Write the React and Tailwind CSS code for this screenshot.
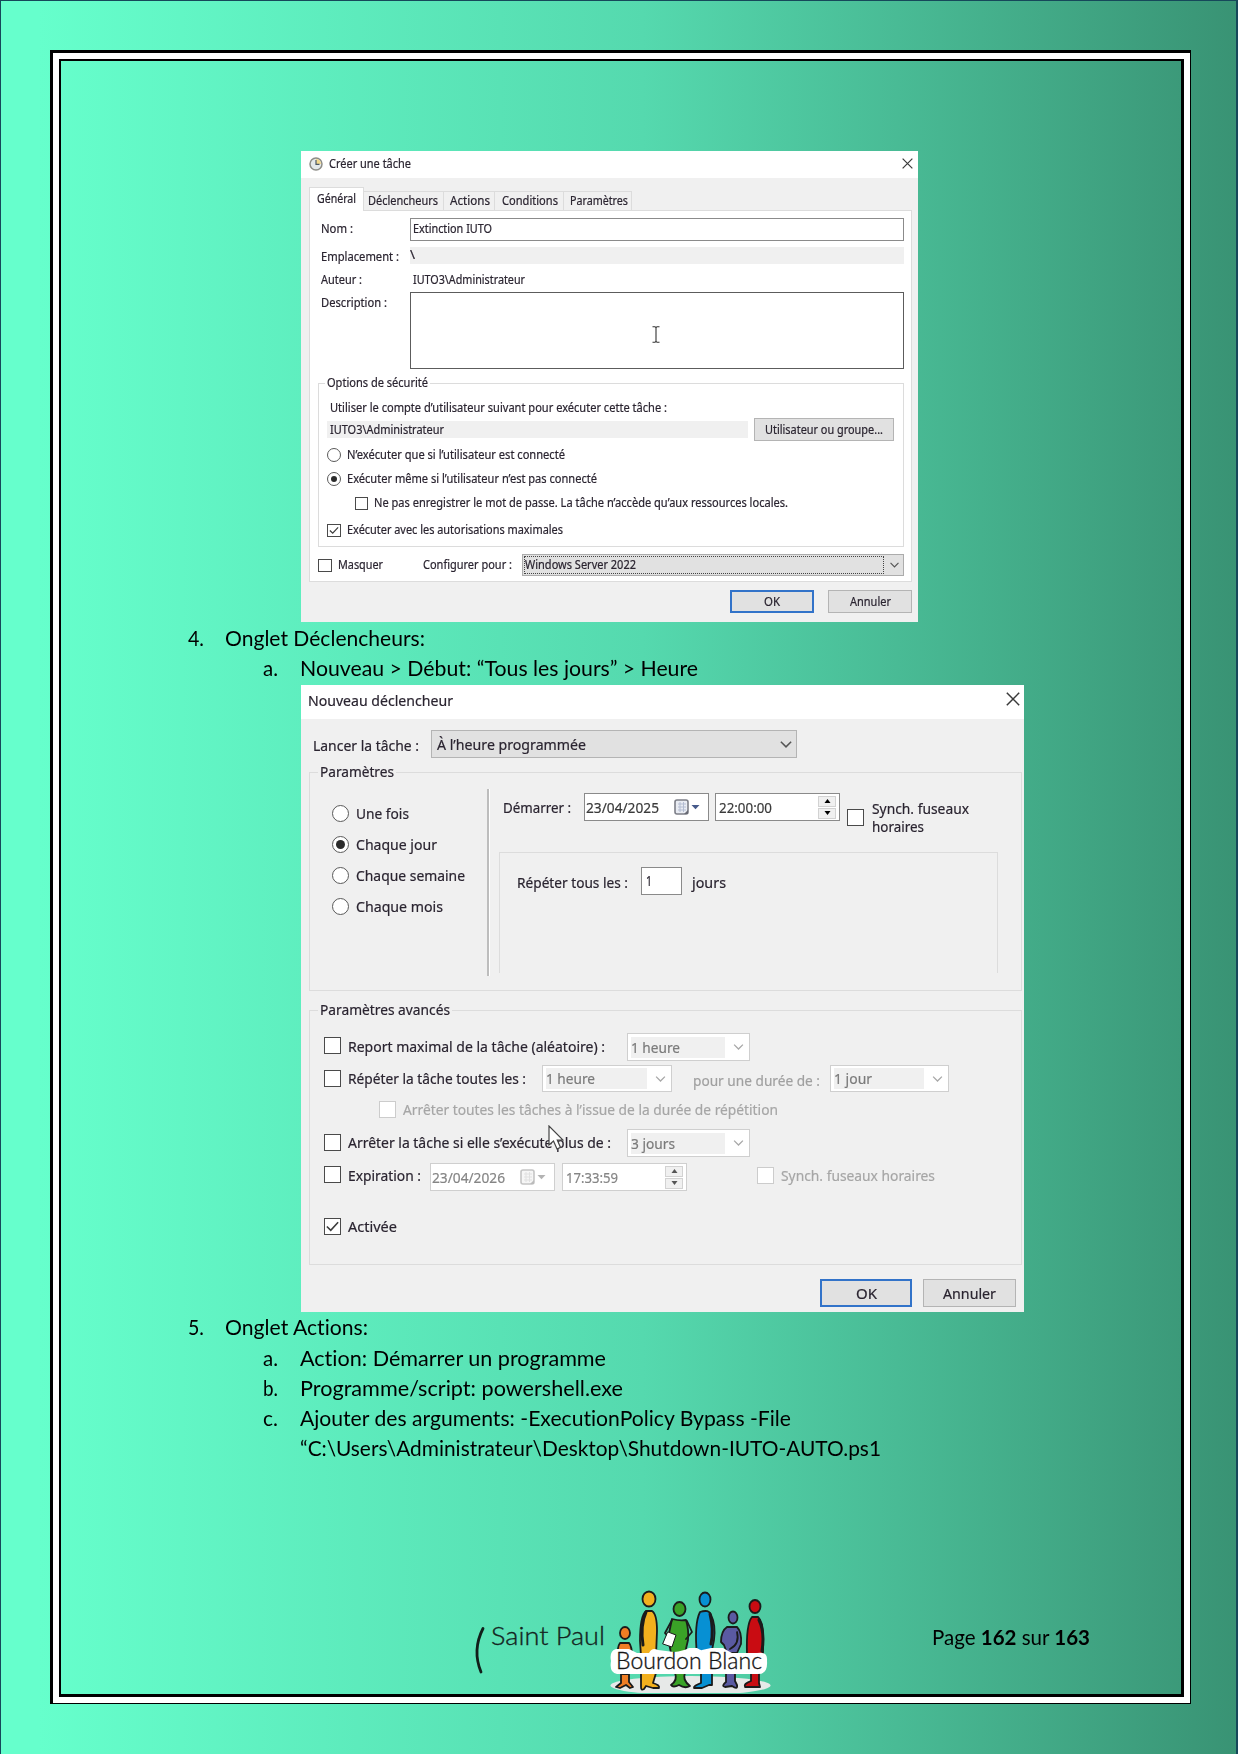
import { useLayoutEffect, useRef } from "react";

// Single-line label whose glyphs are condensed or widened to fill its box.
function T({ className = "", children }) {
  const box = useRef(null);
  const inner = useRef(null);
  useLayoutEffect(() => {
    const el = inner.current;
    el.style.transform = "none";
    const natural = el.getBoundingClientRect().width;
    const wanted = box.current.getBoundingClientRect().width;
    if (natural > 0) el.style.transform = `scaleX(${wanted / natural})`;
  }, [children]);
  return (
    <div ref={box} className={"shrink-0 whitespace-nowrap " + className}>
      <span ref={inner} className="inline-block origin-left">{children}</span>
    </div>
  );
}

function Radio({ checked, className }) {
  return (
    <div className={"flex shrink-0 items-center justify-center rounded-full border border-[#5a5a5a] bg-white " + className}>
      {checked && <div className="h-[58%] w-[58%] rounded-full bg-[#2b2b2b]" />}
    </div>
  );
}

function Check({ checked, muted, className }) {
  return (
    <div className={"shrink-0 border bg-white " + (muted ? "border-[#cccccc] " : "border-[#4a4a4a] ") + className}>
      {checked && (
        <svg viewBox="0 0 12 12" className="h-full w-full" fill="none" stroke="#3c3c3c" strokeWidth="1.3">
          <path d="M1.5 6 L4.6 9 L10.5 2.6" />
        </svg>
      )}
    </div>
  );
}

function Close({ className }) {
  return (
    <svg viewBox="0 0 12 12" className={"shrink-0 " + className} stroke="#3a3a3a" strokeWidth="1.3">
      <path d="M.7 .7 L11.3 11.3 M11.3 .7 L.7 11.3" />
    </svg>
  );
}

function Chevron({ className }) {
  return (
    <svg viewBox="0 0 10 6" className={"shrink-0 " + className} fill="none" strokeWidth="1.3">
      <path d="M.6 .6 L5 5 L9.4 .6" />
    </svg>
  );
}

function Button({ primary, className, children }) {
  return (
    <div className={"flex h-full shrink-0 items-center justify-center bg-[#e1e1e1] " + (primary ? "border-2 border-[#3273c9] " : "border border-[#b4b4b4] ") + className}>
      {children}
    </div>
  );
}

function MutedCombo({ className, children }) {
  return (
    <div className={"flex h-full shrink-0 items-center border border-[#cfcfcf] bg-white pl-[3px] text-[#7b7b7b] " + className}>
      <div className="mr-[8px] flex h-[21px] grow items-center bg-[#f0f0f0]">{children}</div>
      <Chevron className="mr-[5px] h-[6px] w-[11px] stroke-[#a8a8a8]" />
    </div>
  );
}

function DateBox({ muted, className, children }) {
  return (
    <div className={"flex h-full w-[125px] shrink-0 items-center border bg-white pl-[1px] " + (muted ? "border-[#cfcfcf] text-[#858585] " : "border-[#8a8a8a] text-[#3a3a3a] ") + className}>
      {children}
      <svg viewBox="0 0 26 16" className={"ml-auto mr-[8px] h-[16px] w-[26px] shrink-0 " + (muted ? "opacity-45 grayscale" : "")}>
        <rect x="1" y="1" width="13" height="14" rx="2" fill="#e9ecf3" stroke="#7d7f88" strokeWidth="1.6" />
        <path d="M4 5h8M4 8h8M4 11h8M6 3v10M9.500 3v10" stroke="#b4bdd2" strokeWidth="1" />
        <path d="M10 15 L14 11 V15Z" fill="#686a75" />
        <path d="M17.500 6h8l-4 4.200z" fill="#46598a" />
      </svg>
    </div>
  );
}

function TimeBox({ muted, className, children }) {
  return (
    <div className={"flex h-full w-[125px] shrink-0 items-center border bg-white pl-[3px] " + (muted ? "border-[#cfcfcf] text-[#858585] " : "border-[#8a8a8a] text-[#3a3a3a] ") + className}>
      {children}
      <div className="ml-auto mr-[3px] flex h-[23px] w-[18px] shrink-0 flex-col gap-px">
        <div className="flex grow items-center justify-center border border-[#d2d2d2] bg-[#f0f0f0]">
          <svg viewBox="0 0 6 4" className={"h-[4px] w-[7px] " + (muted ? "fill-[#555]" : "fill-black")}><path d="M3 0 6 4H0z" /></svg>
        </div>
        <div className="flex grow items-center justify-center border border-[#d2d2d2] bg-[#f0f0f0]">
          <svg viewBox="0 0 6 4" className={"h-[4px] w-[7px] " + (muted ? "fill-[#555]" : "fill-black")}><path d="M3 4 6 0H0z" /></svg>
        </div>
      </div>
    </div>
  );
}

function Tab({ className, children }) {
  return <div className={"flex h-[19px] shrink-0 items-center border-t border-r border-[#dcdcdc] " + className}>{children}</div>;
}

function TaskDialog() {
  return (
    <div className="relative flex h-[471px] w-[617px] flex-col bg-[#f0f0f0] font-['Noto_Sans',sans-serif] text-[12px] leading-none text-[#2a2430] [-webkit-text-stroke:0.2px]">
      <div className="flex h-[27px] shrink-0 items-center bg-white pb-px pl-[8px]">
        <svg viewBox="0 0 14 14" className="h-[14px] w-[14px] shrink-0">
          <circle cx="7" cy="7" r="6" fill="#e4e9ea" stroke="#8d8d87" strokeWidth="1.500" />
          <path d="M7 7V2a5 5 0 0 1 5 5z" fill="#f3d98d" />
          <path d="M7 3v4.300h3.500" fill="none" stroke="#4d5a66" strokeWidth="1.200" />
        </svg>
        <T className="ml-[6px] w-[82px]">Créer une tâche</T>
        <Close className="mb-[2px] mr-[5px] ml-auto h-[11px] w-[11px]" />
      </div>
      <div className="mt-[9px] ml-[8px] flex h-[23px] shrink-0 items-end">
        <div className="z-10 -mb-px flex h-[24px] w-[55px] shrink-0 items-center border border-b-0 border-[#dcdcdc] bg-white pb-[2px] pl-[7px]"><T className="w-[39px]">Général</T></div>
        <Tab className="w-[80px] pl-[4px]"><T className="w-[70px]">Déclencheurs</T></Tab>
        <Tab className="w-[51px] pl-[6px]"><T className="w-[40px]">Actions</T></Tab>
        <Tab className="w-[69px] pl-[7px]"><T className="w-[56px]">Conditions</T></Tab>
        <Tab className="w-[68px] pl-[6px]"><T className="w-[58px]">Paramètres</T></Tab>
      </div>
      <div className="ml-[8px] flex h-[372px] w-[603px] shrink-0 flex-col border border-[#dcdcdc] bg-white">
        <div className="mt-[7px] flex h-[23px] shrink-0 items-center">
          <div className="w-[100px] pb-px pl-[11px]"><T className="w-[32px]">Nom :</T></div>
          <div className="flex h-full w-[494px] items-center border border-[#8b8b8b] pb-px pl-[2px]"><T className="w-[79px]">Extinction IUTO</T></div>
        </div>
        <div className="mt-[6px] flex h-[17px] shrink-0 items-center">
          <div className="w-[100px] pt-[2px] pl-[11px]"><T className="w-[78px]">Emplacement :</T></div>
          <div className="flex h-full w-[494px] items-center bg-[#f0f0f0] pb-px"><T className="w-[5px]">\</T></div>
        </div>
        <div className="mt-[7px] flex h-[17px] shrink-0 items-center">
          <div className="w-[103px] pl-[11px]"><T className="w-[41px]">Auteur :</T></div>
          <T className="w-[112px]">IUTO3\Administrateur</T>
        </div>
        <div className="mt-[4px] flex h-[77px] shrink-0">
          <div className="w-[100px] pt-[5px] pl-[11px]"><T className="w-[66px]">Description :</T></div>
          <div className="h-full w-[494px] border border-[#5c5c5c] pt-[33px] pl-[241px]">
            <svg viewBox="0 0 8 17" className="h-[17px] w-[8px]" fill="none" stroke="#333" strokeWidth="1.100"><path d="M.5 .700H3L4 1.700L5 .700H7.500M.5 16.300H3L4 15.300L5 16.300H7.500M4 1.700V15.300" /></svg>
          </div>
        </div>
        <div className="mt-[14px] ml-[8px] flex h-[164px] w-[586px] shrink-0 flex-col border border-[#dcdcdc]">
          <div className="-mt-[9px] ml-[6px] flex h-[16px] w-fit shrink-0 items-center bg-white px-[2px]"><T className="w-[101px]">Options de sécurité</T></div>
          <div className="mt-[9px] ml-[11px] flex h-[16px] shrink-0 items-center"><T className="w-[337px]">Utiliser le compte d’utilisateur suivant pour exécuter cette tâche :</T></div>
          <div className="mt-[2px] ml-[8px] flex h-[23px] shrink-0 items-center">
            <div className="flex h-[17px] w-[421px] items-center bg-[#f0f0f0] pl-[3px]"><T className="w-[114px]">IUTO3\Administrateur</T></div>
            <Button className="ml-[6px] w-[140px]"><T className="w-[118px]">Utilisateur ou groupe...</T></Button>
          </div>
          <div className="mt-[6px] ml-[8px] flex h-[16px] shrink-0 items-center gap-[6px]"><Radio className="h-[14px] w-[14px]" /><T className="w-[218px]">N’exécuter que si l’utilisateur est connecté</T></div>
          <div className="mt-[8px] ml-[8px] flex h-[16px] shrink-0 items-center gap-[6px]"><Radio checked className="h-[14px] w-[14px]" /><T className="w-[250px]">Exécuter même si l’utilisateur n’est pas connecté</T></div>
          <div className="mt-[8px] ml-[36px] flex h-[16px] shrink-0 items-center gap-[6px]"><Check className="h-[13px] w-[13px]" /><T className="w-[414px]">Ne pas enregistrer le mot de passe. La tâche n’accède qu’aux ressources locales.</T></div>
          <div className="mt-[11px] ml-[8px] flex h-[16px] shrink-0 items-center gap-[6px]"><Check checked className="h-[13px] w-[14px]" /><T className="w-[216px]">Exécuter avec les autorisations maximales</T></div>
        </div>
        <div className="mt-[7px] ml-[8px] flex h-[22px] shrink-0 items-center">
          <Check className="h-[13px] w-[14px]" />
          <T className="ml-[6px] w-[45px]">Masquer</T>
          <T className="ml-[40px] w-[89px]">Configurer pour :</T>
          <div className="ml-[10px] flex h-full w-[382px] items-center border border-[#acacac] bg-[#e1e1e1] pl-[1px]">
            <div className="flex h-[18px] w-[360px] items-center border border-dotted border-[#444]"><T className="w-[111px]">Windows Server 2022</T></div>
            <Chevron className="ml-[6px] h-[6px] w-[9px] stroke-[#555]" />
          </div>
        </div>
      </div>
      <div className="mt-[8px] ml-[429px] flex h-[23px] shrink-0">
        <Button primary className="w-[84px]"><T className="w-[16px]">OK</T></Button>
        <Button className="ml-[14px] w-[84px]"><T className="w-[41px]">Annuler</T></Button>
      </div>
    </div>
  );
}

function TriggerDialog() {
  return (
    <div className="relative flex h-[627px] w-[723px] flex-col bg-[#f0f0f0] font-['Noto_Sans',sans-serif] text-[14.500px] leading-none text-[#2a2430] [-webkit-text-stroke:0.2px]">
      <div className="flex h-[34px] shrink-0 items-center bg-white pb-[4px] pl-[7px]">
        <T className="w-[145px]">Nouveau déclencheur</T>
        <Close className="mr-[4px] mb-[3px] ml-auto h-[14px] w-[14px]" />
      </div>
      <div className="mt-[11px] flex h-[28px] shrink-0 items-center">
        <T className="mt-[3px] ml-[12px] w-[106px]">Lancer la tâche :</T>
        <div className="ml-[12px] flex h-full w-[366px] items-center border border-[#b4b4b4] bg-[#e1e1e1] pl-[5px]">
          <T className="w-[149px]">À l’heure programmée</T>
          <Chevron className="mr-[4px] ml-auto h-[7px] w-[12px] stroke-[#555]" />
        </div>
      </div>
      <div className="mt-[14px] ml-[8px] flex h-[219px] w-[713px] shrink-0 flex-col border border-[#dcdcdc]">
        <div className="-mt-[10px] ml-[8px] flex h-[16px] w-fit shrink-0 items-center bg-[#f0f0f0] px-[2px]"><T className="w-[74px]">Paramètres</T></div>
        <div className="mt-px flex grow">
          <div className="ml-[22px] w-[154px] shrink-0 pt-[18px]">
            <div className="flex h-[31px] items-center gap-[7px]"><Radio className="h-[17px] w-[17px]" /><T className="w-[53px]">Une fois</T></div>
            <div className="flex h-[31px] items-center gap-[7px]"><Radio checked className="h-[17px] w-[17px]" /><T className="w-[81px]">Chaque jour</T></div>
            <div className="flex h-[31px] items-center gap-[7px]"><Radio className="h-[17px] w-[17px]" /><T className="w-[109px]">Chaque semaine</T></div>
            <div className="flex h-[31px] items-center gap-[7px]"><Radio className="h-[17px] w-[17px]" /><T className="w-[87px]">Chaque mois</T></div>
          </div>
          <div className="mt-[9px] ml-[1px] h-[187px] w-[3px] shrink-0 border-r border-white bg-[#bdbdbd]" />
          <div className="flex flex-col">
            <div className="mt-[13px] flex h-[28px] shrink-0 items-center">
              <T className="ml-[13px] w-[68px]">Démarrer :</T>
              <DateBox className="ml-[13px]"><T className="w-[73px]">23/04/2025</T></DateBox>
              <TimeBox className="ml-[6px]"><T className="w-[53px]">22:00:00</T></TimeBox>
              <Check className="mt-[16px] ml-[7px] h-[17px] w-[17px] self-start" />
              <div className="mt-[6px] ml-[8px] self-start leading-[18px]">
                <T className="h-[18px] w-[97px]">Synch. fuseaux</T>
                <T className="h-[18px] w-[52px]">horaires</T>
              </div>
            </div>
            <div className="mt-[31px] ml-[9px] h-[121px] w-[499px] shrink-0 border border-b-0 border-[#dcdcdc] pt-[14px]">
              <div className="flex h-[28px] items-center">
                <T className="mt-[3px] ml-[17px] w-[111px]">Répéter tous les :</T>
                <div className="ml-[13px] flex h-full w-[41px] shrink-0 items-center border border-[#8a8a8a] bg-white pb-[2px] pl-[4px]"><T className="w-[6px]">1</T></div>
                <T className="mt-[3px] ml-[10px] w-[34px]">jours</T>
              </div>
            </div>
          </div>
        </div>
      </div>
      <div className="mt-[19px] ml-[8px] flex h-[255px] w-[713px] shrink-0 flex-col border border-[#dcdcdc]">
        <div className="-mt-[10px] ml-[8px] flex h-[16px] w-fit shrink-0 items-center bg-[#f0f0f0] px-[2px]"><T className="w-[130px]">Paramètres avancés</T></div>
        <div className="mt-[16px] ml-[14px] flex h-[28px] shrink-0 items-center">
          <Check className="mb-[3px] h-[17px] w-[17px]" />
          <T className="mb-[2px] ml-[7px] w-[257px]">Report maximal de la tâche (aléatoire) :</T>
          <MutedCombo className="ml-[22px] w-[123px]"><T className="w-[49px]">1 heure</T></MutedCombo>
        </div>
        <div className="mt-[4px] ml-[14px] flex h-[27px] shrink-0 items-center">
          <Check className="h-[17px] w-[17px]" />
          <T className="ml-[7px] w-[178px]">Répéter la tâche toutes les :</T>
          <MutedCombo className="ml-[16px] w-[130px]"><T className="w-[49px]">1 heure</T></MutedCombo>
          <T className="mt-[4px] ml-[21px] w-[127px] text-[#a0a0a0]">pour une durée de :</T>
          <MutedCombo className="ml-[10px] w-[119px]"><T className="w-[38px]">1 jour</T></MutedCombo>
        </div>
        <div className="mt-[9px] ml-[69px] flex h-[17px] shrink-0 items-center text-[#a6a6a6]">
          <Check muted className="h-[17px] w-[17px]" />
          <T className="ml-[7px] w-[375px]">Arrêter toutes les tâches à l’issue de la durée de répétition</T>
        </div>
        <div className="mt-[11px] ml-[14px] flex h-[28px] shrink-0 items-center">
          <Check className="mb-[2px] h-[17px] w-[17px]" />
          <T className="mb-[2px] ml-[7px] w-[263px]">Arrêter la tâche si elle s’exécute plus de :</T>
          <MutedCombo className="ml-[16px] w-[123px]"><T className="w-[44px]">3 jours</T></MutedCombo>
        </div>
        <div className="mt-[6px] ml-[14px] flex h-[28px] shrink-0 items-center">
          <Check className="mb-[5px] h-[17px] w-[17px]" />
          <T className="mb-[4px] ml-[7px] w-[73px]">Expiration :</T>
          <DateBox muted className="ml-[9px]"><T className="w-[73px]">23/04/2026</T></DateBox>
          <TimeBox muted className="ml-[7px]"><T className="w-[52px]">17:33:59</T></TimeBox>
          <Check muted className="mb-[4px] ml-[70px] h-[17px] w-[17px]" />
          <T className="mb-[4px] ml-[7px] w-[154px] text-[#a6a6a6]">Synch. fuseaux horaires</T>
        </div>
        <div className="mt-[27px] ml-[14px] flex h-[17px] shrink-0 items-center">
          <Check checked className="h-[17px] w-[17px]" />
          <T className="ml-[7px] w-[49px]">Activée</T>
        </div>
      </div>
      <div className="mt-[14px] ml-[519px] flex h-[28px] shrink-0">
        <Button primary className="w-[92px]"><T className="w-[21px]">OK</T></Button>
        <Button className="ml-[11px] w-[93px]"><T className="w-[53px]">Annuler</T></Button>
      </div>
      {/* mouse pointer */}
      <svg viewBox="0 0 16 25" className="absolute top-[440px] left-[247px] h-[25px] w-[16px]">
        <path d="M1 1 V20 L5.500 16 L9 24 L12.500 22.400 L9.300 15 H15 Z" fill="white" stroke="#444" strokeWidth="1.200" />
      </svg>
    </div>
  );
}

function Step({ n, className, children }) {
  return <div className="flex h-[30px] shrink-0 pl-[127px]"><T className="w-[16px]">{n}</T><T className={"ml-[21px] " + className}>{children}</T></div>;
}

function SubStep({ n, className, children }) {
  return <div className="flex h-[30px] shrink-0 pl-[202px]"><div className="w-[37px]"><T className="w-[15px]">{n}</T></div><T className={className}>{children}</T></div>;
}

function Logo() {
  return (
    <svg viewBox="0 0 320 113" className="h-[113px] w-[320px] shrink-0 font-['Lato',sans-serif]" strokeLinejoin="round" strokeLinecap="round">
      <path d="M23 48.500 Q12 70 21 92" fill="none" stroke="#111f1a" strokeWidth="2.800" />
      <text x="31" y="65" fontSize="25" fontWeight="300" textLength="114" lengthAdjust="spacingAndGlyphs" fill="#14251f" stroke="#14251f" strokeWidth="0.350">Saint Paul</text>
      <ellipse cx="230.500" cy="105.500" rx="80" ry="9.500" fill="#e7e9e8" />
      <g stroke="#1b1b1b" strokeWidth="1.800">
        <g fill="#ef7d24">
          <ellipse cx="165" cy="53" rx="5" ry="6" />
          <path d="M160 63h9q3 3 3 14h-14q-1-10 2-14zM161 94v9l-5 4 4 1 6-3 4 3 3-1-4-5v-8z" />
        </g>
        <g fill="#f2b01e">
          <ellipse cx="189" cy="19" rx="6.500" ry="7.500" />
          <path d="M186 31h6q5 3 5 20l-1 25h-15l-1-15q0-25 6-30zM181 93v14q0 4 3 2l2-3 7 2h6q1-3-6-5l3-10z" />
          <path d="M186 32q-6 13-3 33" fill="none" strokeWidth="3" />
        </g>
        <g fill="#3aa227">
          <ellipse cx="219.500" cy="29" rx="6" ry="7" />
          <path d="M212 39q8 2 14 1 3 10 2 20l-3 13h-14l-3-15zM215 93q3 7-4 12 2 3 8 0 6 4 11 1-8-6-5-13z" />
          <path d="M227 41l5 11-6 7M212 40l-7 13 4 4" fill="none" />
          <path d="M208 52l8 3-4 12-9-3z" fill="white" strokeWidth="1" />
        </g>
        <g fill="#0790d3">
          <ellipse cx="245" cy="19.500" rx="5.500" ry="7" />
          <path d="M240 32q9-3 11 3 5 10 3 25l-3 15h-14q-3-31 3-43zM241 93v10q-8 3-7 5h8l7-3h3v-12z" />
          <path d="M250 34q4 16 1 30" fill="none" strokeWidth="3" />
        </g>
        <g fill="#5a5aa2">
          <ellipse cx="273" cy="37.500" rx="4.500" ry="6" />
          <path d="M267 47h10q5 5 4 17l-4 9h-10l-3-8-3-3q0-11 6-15zM266 92v10q-5 4-1 5l7-1q6 4 5-1l-2-4v-9z" />
          <path d="M277 52q3 12-7 17" fill="none" />
        </g>
        <g fill="#c90c12">
          <ellipse cx="295" cy="26.500" rx="5.500" ry="6.500" />
          <path d="M292 37h6q5 5 5 18v19h-16q-1-30 5-37zM291 92v9q-8 3-6 6h15l-1-4v-11z" />
          <path d="M299 40q6 12 3 31" fill="none" strokeWidth="3" />
        </g>
      </g>
      <path d="M156 69h13q4 2 8 4h12q3-6 9-3l16 2q9-1 15-4h8q5 3 5 2l9-2h12q5 3 9 5h25q11-2 10 8 1 13-9 13H157q-8-1-6-13-2-10 5-12z" fill="white" />
      <text x="156" y="88.500" fontSize="23.500" fontWeight="300" textLength="146" lengthAdjust="spacingAndGlyphs" fill="#151515" stroke="#151515" strokeWidth="0.350">Bourdon Blanc</text>
    </svg>
  );
}

export default function App() {
  return (
    <div className="h-[1754px] w-[1241px] overflow-hidden bg-white">
      <div className="h-[1754px] w-[1238px] border-t border-r-2 border-l border-[#16485a] bg-[linear-gradient(90deg,#66ffcc_0%,#66ffcc_3%,#55d9ae_52%,#399374_100%)] pt-[49px] pl-[49px]">
        <div className="h-[1654px] w-[1141px] border-t-3 border-r border-b border-l-3 border-black">
          <div className="h-full w-full border-6 border-white">
            <div className="flex h-full w-full flex-col border-t-2 border-r-3 border-b-3 border-l-2 border-black font-['Lato',sans-serif] text-[20.300px] leading-[30px] text-black [font-variant-ligatures:none]">
              <div className="mt-[90px] ml-[240px]"><TaskDialog /></div>
              <div className="mt-[1px]">
                <Step n="4." className="w-[200px]">Onglet Déclencheurs:</Step>
                <SubStep n="a." className="w-[398px]">Nouveau &gt; Début: “Tous les jours” &gt; Heure</SubStep>
              </div>
              <div className="mt-[2px] ml-[240px]"><TriggerDialog /></div>
              <Step n="5." className="w-[143px]">Onglet Actions:</Step>
              <div className="mt-[1px]">
                <SubStep n="a." className="w-[306px]">Action: Démarrer un programme</SubStep>
                <SubStep n="b." className="w-[323px]">Programme/script: powershell.exe</SubStep>
                <SubStep n="c." className="w-[491px]">Ajouter des arguments: -ExecutionPolicy Bypass -File</SubStep>
                <SubStep n="" className="w-[581px]">“C:\Users\Administrateur\Desktop\Shutdown-IUTO-AUTO.ps1</SubStep>
              </div>
              <div className="mt-[117px] flex h-[113px] shrink-0 pl-[399px]">
                <Logo />
                <T className="mt-[42px] ml-[152px] w-[158px]">Page <b>162</b> sur <b>163</b></T>
              </div>
            </div>
          </div>
        </div>
      </div>
    </div>
  );
}
